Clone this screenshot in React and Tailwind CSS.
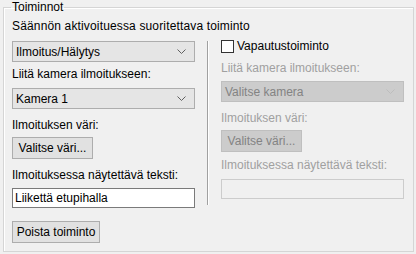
import { useState } from "react"

function Chevron({ disabled }) {
    return (
        <svg width="9" height="5" viewBox="0 0 9 5" className="shrink-0">
            <path d="M0.5 0.5 L4.5 4.5 L8.5 0.5" fill="none" stroke={disabled ? '#bdbdbd' : '#606060'} strokeWidth="1" />
        </svg>
    )
}

function Combo({ value, disabled }) {
    return (
        <div className={`h-[21px] w-full flex items-center justify-between pl-[3px] pr-[8px] border ${disabled ? 'bg-[#cccccc] border-[#bfbfbf] text-[#838383]' : 'bg-[#e5e5e5] border-[#adadad] text-black'}`}>
            <span className="leading-none">{value}</span>
            <Chevron disabled={disabled} />
        </div>
    )
}

function Btn({ label, width, disabled }) {
    return (
        <button className={`h-[22px] ${width} border text-center ${disabled ? 'bg-[#cccccc] border-[#bfbfbf] text-[#838383]' : 'bg-[#e1e1e1] border-[#adadad] text-black'}`}>{label}</button>
    )
}

export default function App() {
    const [text, setText] = useState('Liikettä etupihalla');

    return (
        <div className="w-[416px] h-[254px] bg-[#f0f0f0] pt-0 font-['Liberation_Sans',sans-serif] text-[12px] text-black overflow-hidden">
            <fieldset className="ml-[3px] w-[411px] h-[252px] border border-[#d5d5d5] shadow-[inset_1px_1px_0_#ffffff] px-[8px]">
                <legend className="px-[1px] -ml-[1px] leading-[14px]">Toiminnot</legend>

                <p className="mt-[5px] leading-[15px] tracking-[0.15px]">Säännön aktivoituessa suoritettava toiminto</p>

                <div className="flex">
                    {/* vasen sarake */}
                    <div className="w-[183px] flex flex-col">
                        <div className="mt-[7px]"><Combo value="Ilmoitus/Hälytys" /></div>
                        <p className="mt-[5px] leading-[15px]">Liitä kamera ilmoitukseen:</p>
                        <div className="mt-[6px]"><Combo value="Kamera 1" /></div>
                        <p className="mt-[9px] leading-[15px]">Ilmoituksen väri:</p>
                        <div className="mt-[4px]"><Btn label="Valitse väri..." width="w-[81px]" /></div>
                        <p className="mt-[9px] leading-[15px]">Ilmoituksessa näytettävä teksti:</p>
                        <input value={text} onChange={(e) => setText(e.target.value)} className="mt-[5px] h-[20px] w-full bg-white border border-[#7a7a7a] pl-[2px] outline-none" />
                        <div className="mt-[13px]"><Btn label="Poista toiminto" width="w-[88px]" /></div>
                    </div>

                    <div className="ml-[12px] mt-[7px] w-[1px] h-[164px] bg-[#a0a0a0] shadow-[1px_0_0_#ffffff]" />

                    {/* oikea sarake */}
                    <div className="ml-[13px] w-[183px] flex flex-col">
                        <label className="mt-[5px] flex items-center gap-[3px] leading-[15px]">
                            <span className="w-[13px] h-[13px] bg-white border border-[#333333]" />
                            Vapautustoiminto
                        </label>
                        <p className="mt-[7px] leading-[15px] text-[#a0a0a0]">Liitä kamera ilmoitukseen:</p>
                        <div className="mt-[5px]"><Combo value="Valitse kamera" disabled /></div>
                        <p className="mt-[9px] leading-[15px] text-[#a0a0a0]">Ilmoituksen väri:</p>
                        <div className="mt-[4px]"><Btn label="Valitse väri..." width="w-[81px]" disabled /></div>
                        <p className="mt-[6px] leading-[15px] text-[#a0a0a0]">Ilmoituksessa näytettävä teksti:</p>
                        <div className="mt-[6px] h-[20px] w-full border border-[#cccccc]" />
                    </div>
                </div>
            </fieldset>
        </div>
    )
}
